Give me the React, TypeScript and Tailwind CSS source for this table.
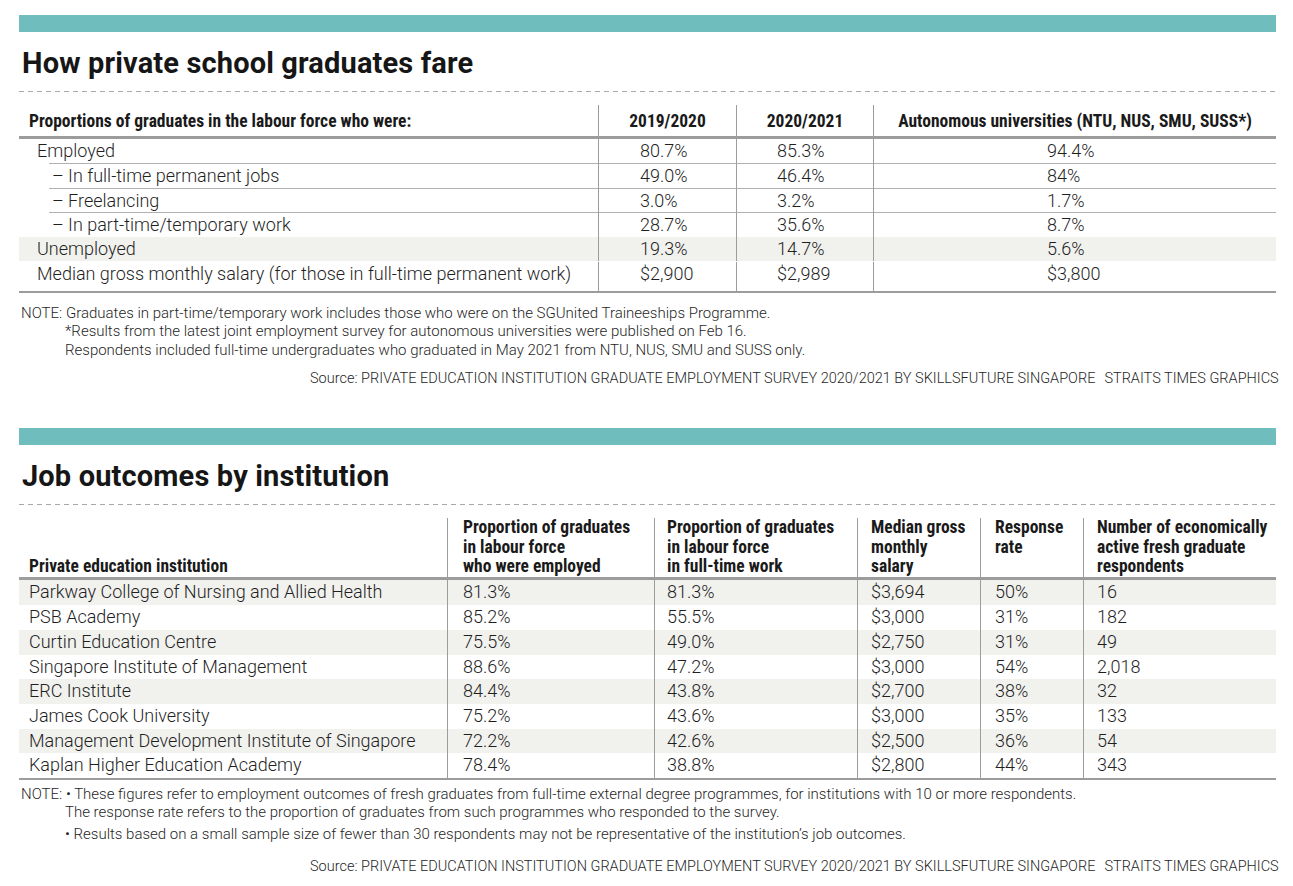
const narrow = "font-['Liberation_Sans_Narrow','Roboto_Condensed','DejaVu_Sans_Condensed',sans-serif]"
const body = "font-['Roboto',sans-serif] font-light"

const t1Rows = [
  { label: 'Employed', sub: false, sep: false, bg: false, v: ['80.7%', '85.3%', '94.4%'] },
  { label: '– In full-time permanent jobs', sub: true, sep: true, bg: false, v: ['49.0%', '46.4%', '84%'] },
  { label: '– Freelancing', sub: true, sep: true, bg: false, v: ['3.0%', '3.2%', '1.7%'] },
  { label: '– In part-time/temporary work', sub: true, sep: true, bg: false, v: ['28.7%', '35.6%', '8.7%'] },
  { label: 'Unemployed', sub: false, sep: false, bg: true, v: ['19.3%', '14.7%', '5.6%'] },
  {
    label: 'Median gross monthly salary (for those in full-time permanent work)',
    sub: false,
    sep: false,
    bg: false,
    v: ['$2,900', '$2,989', '$3,800'],
  },
]

const t2Rows = [
  ['Parkway College of Nursing and Allied Health', '81.3%', '81.3%', '$3,694', '50%', '16'],
  ['PSB Academy', '85.2%', '55.5%', '$3,000', '31%', '182'],
  ['Curtin Education Centre', '75.5%', '49.0%', '$2,750', '31%', '49'],
  ['Singapore Institute of Management', '88.6%', '47.2%', '$3,000', '54%', '2,018'],
  ['ERC Institute', '84.4%', '43.8%', '$2,700', '38%', '32'],
  ['James Cook University', '75.2%', '43.6%', '$3,000', '35%', '133'],
  ['Management Development Institute of Singapore', '72.2%', '42.6%', '$2,500', '36%', '54'],
  ['Kaplan Higher Education Academy', '78.4%', '38.8%', '$2,800', '44%', '343'],
]

function Heading({ title }: { title: string }) {
  return (
    <div>
      <div className="h-[17px] bg-[#6fbdbd]" />
      <h2 className="mt-[14px] pl-[3px] font-['Roboto',sans-serif] text-[29px] font-bold leading-[34px] tracking-[0.15px] text-[#161616]">
        {title}
      </h2>
      <div className="mt-[11px] h-px bg-[repeating-linear-gradient(to_right,#a8a8a8_0_5px,transparent_5px_9px)]" />
    </div>
  )
}

function Source() {
  return (
    <div className={`whitespace-nowrap pl-[291px] text-[14.5px] leading-[18px] text-[#1f1f1f] ${body}`}>
      Source: PRIVATE EDUCATION INSTITUTION GRADUATE EMPLOYMENT SURVEY 2020/2021 BY SKILLSFUTURE SINGAPORE
      <span className="ml-[9px]">STRAITS TIMES GRAPHICS</span>
    </div>
  )
}

export default function App() {
  const divider = 'border-l border-[#9c9c9c]'
  const sepLine = 'border-t border-t-[#b0b0b0]'
  return (
    <div className="h-[886px] w-[1293px] overflow-hidden bg-white">
      <div className="ml-[19px] w-[1257px] pt-[15px]">
        <Heading title="How private school graduates fare" />

        {/* table 1 */}
        <div className="mt-[13px]">
          <div
            className={`grid h-[34px] grid-cols-[579px_138px_137px_403px] border-b-[3px] border-[#9c9c9c] text-[17.5px] font-bold leading-[20px] text-[#1a1a1a] ${narrow}`}
          >
            <div className="flex items-center pl-[10px] pt-[1px]">Proportions of graduates in the labour force who were:</div>
            <div className={`flex items-center justify-center pt-[1px] ${divider}`}>2019/2020</div>
            <div className={`flex items-center justify-center pt-[1px] ${divider}`}>2020/2021</div>
            <div className={`flex items-center justify-center pt-[1px] ${divider}`}>
              Autonomous universities (NTU, NUS, SMU, SUSS*)
            </div>
          </div>
          {t1Rows.map((r, i) => (
            <div
              key={r.label}
              className={`grid grid-cols-[579px_138px_137px_403px] text-[18px] leading-[24px] text-[#1f1f1f] ${body} ${r.bg ? 'bg-[#f1f1ee]' : ''} ${i === t1Rows.length - 1 ? 'h-[30px] pt-px' : 'h-[24.4px]'}`}
            >
              <div className="flex h-full">
                <div className={r.sub ? `ml-[30px] w-full pl-[3px] ${sepLine}` : 'w-full pl-[18px]'}>{r.label}</div>
              </div>
              <div className={`pl-[41px] ${divider} ${r.sep ? sepLine : ''}`}>{r.v[0]}</div>
              <div className={`pl-[40px] ${divider} ${r.sep ? sepLine : ''}`}>{r.v[1]}</div>
              <div className={`pl-[173px] ${divider} ${r.sep ? sepLine : ''}`}>{r.v[2]}</div>
            </div>
          ))}
          <div className="h-[2px] bg-[#9c9c9c]" />
        </div>

        <div className={`mt-[11px] pl-[2px] text-[15px] leading-[18.5px] text-[#1f1f1f] ${body}`}>
          <div>NOTE: Graduates in part-time/temporary work includes those who were on the SGUnited Traineeships Programme.</div>
          <div className="pl-[44px]">
            *Results from the latest joint employment survey for autonomous universities were published on Feb 16.
          </div>
          <div className="pl-[44px]">
            Respondents included full-time undergraduates who graduated in May 2021 from NTU, NUS, SMU and SUSS only.
          </div>
        </div>
        <div className="mt-[11px]">
          <Source />
        </div>

        <div className="mt-[40px]">
          <Heading title="Job outcomes by institution" />
        </div>

        {/* table 2 */}
        <div className="mt-[13px]">
          <div
            className={`grid h-[62px] grid-cols-[428px_207px_203px_123px_103px_193px] border-b-[3px] border-[#9c9c9c] pb-[1px] text-[17.5px] font-bold leading-[19.5px] text-[#1a1a1a] ${narrow}`}
          >
            <div className="flex items-end pl-[10px]">Private education institution</div>
            <div className={`flex items-end pl-[15px] ${divider}`}>
              Proportion of graduates
              <br />
              in labour force
              <br />
              who were employed
            </div>
            <div className={`flex items-end pl-[12px] ${divider}`}>
              Proportion of graduates
              <br />
              in labour force
              <br />
              in full-time work
            </div>
            <div className={`flex items-end pl-[13px] ${divider}`}>
              Median gross
              <br />
              monthly
              <br />
              salary
            </div>
            <div className={`pl-[14px] ${divider}`}>
              Response
              <br />
              rate
            </div>
            <div className={`flex items-end pl-[13px] ${divider}`}>
              Number of economically
              <br />
              active fresh graduate
              <br />
              respondents
            </div>
          </div>
          {t2Rows.map((r, i) => (
            <div
              key={r[0]}
              className={`grid h-[24.7px] grid-cols-[428px_207px_203px_123px_103px_193px] text-[18px] leading-[24.7px] text-[#1f1f1f] ${body} ${i % 2 === 0 ? 'bg-[#f1f1ee]' : ''}`}
            >
              <div className="pl-[10px]">{r[0]}</div>
              <div className={`pl-[15px] ${divider}`}>{r[1]}</div>
              <div className={`pl-[12px] ${divider}`}>{r[2]}</div>
              <div className={`pl-[13px] ${divider}`}>{r[3]}</div>
              <div className={`pl-[14px] ${divider}`}>{r[4]}</div>
              <div className={`pl-[13px] ${divider}`}>{r[5]}</div>
            </div>
          ))}
          <div className="h-[2px] bg-[#9c9c9c]" />
        </div>

        <div className={`mt-[5px] pl-[2px] text-[15px] leading-[18.5px] text-[#1f1f1f] ${body}`}>
          <div>
            NOTE: • These figures refer to employment outcomes of fresh graduates from full-time external degree programmes,
            for institutions with 10 or more respondents.
          </div>
          <div className="pl-[44px]">
            The response rate refers to the proportion of graduates from such programmes who responded to the survey.
          </div>
          <div className="mt-[3px] pl-[44px]">
            • Results based on a small sample size of fewer than 30 respondents may not be representative of the
            institution’s job outcomes.
          </div>
        </div>
        <div className="mt-[15px]">
          <Source />
        </div>
      </div>
    </div>
  )
}
